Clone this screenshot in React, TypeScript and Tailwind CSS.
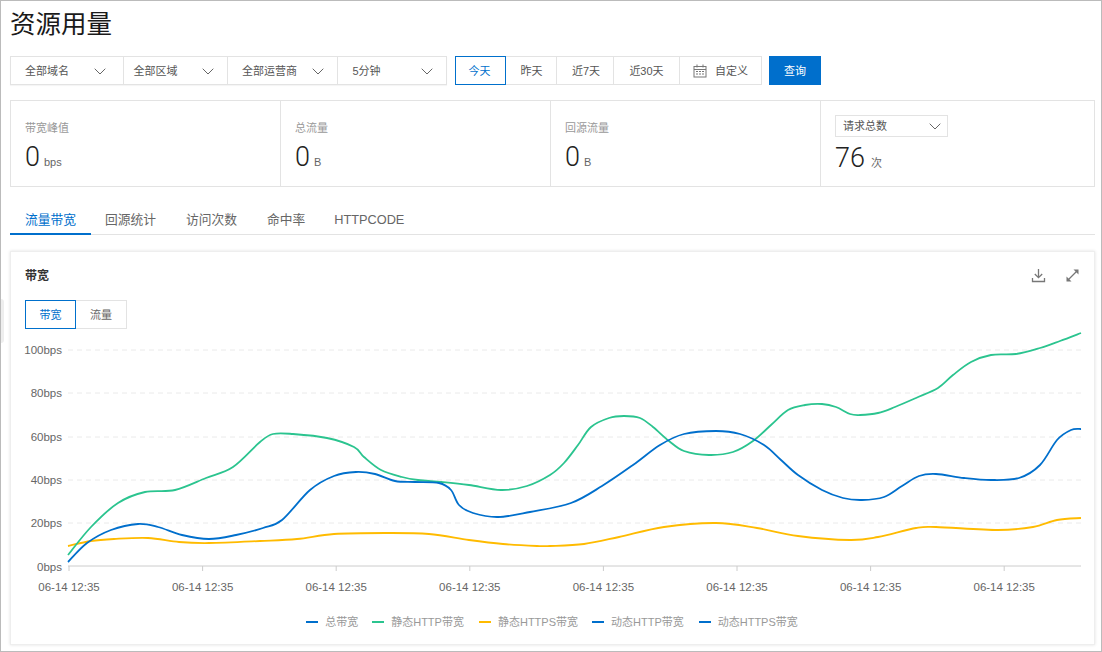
const font = { fontFamily: '"Liberation Sans", "Noto Sans CJK SC", sans-serif' };

const green = [[68,555],[91,527],[118,503],[145,492],[175,490],[206,478],[233,467],[260,442],[273,434],[293,434],[327,438],[354,447],[364,457],[381,470],[402,477],[418,480],[442,482],[469,485],[501,490],[527,486],[550,475],[564,463],[578,445],[591,427],[609,418],[624,416],[640,418],[653,427],[669,441],[684,451],[709,455],[733,452],[753,441],[771,425],[788,410],[805,405],[822,404],[836,407],[850,414],[860,415],[878,413],[895,407],[916,398],[938,388],[953,375],[971,362],[991,355],[1016,354],[1040,348],[1060,341],[1081,333]];
const blue = [[68,562],[87,543],[111,530],[138,524],[158,527],[182,535],[209,539],[236,535],[263,528],[282,520],[310,490],[334,476],[356,472],[375,474],[395,481],[415,482],[439,483],[451,490],[459,505],[473,513],[498,517],[530,512],[571,503],[602,486],[633,465],[660,445],[684,434],[716,431],[740,434],[764,445],[781,460],[798,475],[822,490],[843,498],[862,500],[884,497],[902,486],[919,476],[936,474],[964,478],[991,480],[1019,478],[1040,465],[1057,440],[1071,430],[1081,429]];
const yellow = [[68,546],[91,541],[114,539],[148,538],[179,542],[209,543],[260,541],[297,539],[334,534],[385,533],[429,534],[469,540],[503,544],[537,546],[550,546],[584,544],[619,537],[664,527],[716,523],[757,528],[798,536],[850,540],[878,537],[916,528],[936,527],[998,530],[1033,527],[1057,520],[1081,518]];

// catmull-rom through the sampled points
function smooth(pts: number[][]) {
  let d = `M${pts[0][0]} ${pts[0][1]}`;
  for (let i = 0; i < pts.length - 1; i++) {
    const p0 = pts[i - 1] || pts[i];
    const p1 = pts[i];
    const p2 = pts[i + 1];
    const p3 = pts[i + 2] || p2;
    const c1x = p1[0] + (p2[0] - p0[0]) / 6;
    const c1y = p1[1] + (p2[1] - p0[1]) / 6;
    const c2x = p2[0] - (p3[0] - p1[0]) / 6;
    const c2y = p2[1] - (p3[1] - p1[1]) / 6;
    d += ` C${c1x} ${c1y} ${c2x} ${c2y} ${p2[0]} ${p2[1]}`;
  }
  return d;
}

const gridLines = [
  { y: 350, label: '100bps' },
  { y: 393, label: '80bps' },
  { y: 437, label: '60bps' },
  { y: 480, label: '40bps' },
  { y: 523, label: '20bps' },
];
const ticks = [69, 202.6, 336.2, 469.8, 603.4, 737, 870.6, 1004.2];

const selects = [
  { label: '全部域名', box: 'w-[113px] pl-[14px] pr-[17px]' },
  { label: '全部区域', box: 'w-[105px] pl-[10px] pr-[13px]' },
  { label: '全部运营商', box: 'w-[110px] pl-[14px] pr-[13px]' },
  { label: '5分钟', box: 'w-[109px] pl-[15px] pr-[13px]' },
];

const legend = [
  { label: '总带宽', color: 'bg-[#006fcc]', ml: 'ml-0' },
  { label: '静态HTTP带宽', color: 'bg-[#2bc48f]', ml: 'ml-[14px]' },
  { label: '静态HTTPS带宽', color: 'bg-[#ffbb00]', ml: 'ml-[15px]' },
  { label: '动态HTTP带宽', color: 'bg-[#006fcc]', ml: 'ml-[14px]' },
  { label: '动态HTTPS带宽', color: 'bg-[#006fcc]', ml: 'ml-[15px]' },
];

function Chevron() {
  return (
    <svg width="12" height="7" viewBox="0 0 12 7" fill="none" stroke="#666" strokeWidth="1">
      <path d="M0.7 0.7 L6 6 L11.3 0.7" />
    </svg>
  );
}

function Stat({ label, value, unit, w }: { label: string; value: string; unit: string; w: string }) {
  return (
    <div className={`${w} h-full border-r border-[#e3e3e3] pl-[14px] pt-[20px]`}>
      <p className="text-[11px] leading-[15px] text-[#999]">{label}</p>
      <p className="mt-[4px] flex items-baseline leading-[34px]">
        <span className="text-[27px] font-light text-[#222]" style={{ fontFamily: 'Roboto, sans-serif' }}>{value}</span>
        <span className="ml-[4px] text-[11px] text-[#666]">{unit}</span>
      </p>
    </div>
  );
}

export default function App() {
  return (
    <div className="relative h-[652px] w-[1102px] overflow-hidden border border-[#bbb] bg-white px-[9px]" style={font}>
      <div className="absolute left-0 top-[298px] h-[44px] w-[3px] rounded-r-sm bg-[#eee]" />

      <h1 className="h-[55px] pt-[5px] text-[25.5px] leading-[36px] text-[#1a1a1a]">资源用量</h1>

      <div className="flex h-[29px]">
        <div className="flex h-full w-[437px] border border-[#e3e3e3] shadow-[0_1px_1px_rgba(0,0,0,0.04)]">
          {selects.map((s) => (
            <div
              key={s.label}
              className={`${s.box} flex items-center justify-between border-r border-[#e3e3e3] pt-[1px] text-[11px] text-[#555] last:border-r-0`}
            >
              <span>{s.label}</span>
              <Chevron />
            </div>
          ))}
        </div>
        <div className="ml-[8px] flex h-full w-[307px] border border-[#e3e3e3] text-[11px] text-[#555]">
          <div className="-m-px flex w-[51px] items-center justify-center border border-[#0070cc] pr-[2px] pt-[1px] text-[#0070cc]">今天</div>
          <div className="flex w-[52px] items-center justify-center border-r border-[#e3e3e3] pl-[2px] pt-[1px]">昨天</div>
          <div className="flex w-[57px] items-center justify-center border-r border-[#e3e3e3] pl-[2px] pt-[1px]">近7天</div>
          <div className="flex w-[66px] items-center justify-center border-r border-[#e3e3e3] pt-[1px]">近30天</div>
          <div className="flex flex-1 items-center justify-center gap-[8px] pt-[1px]">
            <svg width="14" height="14" viewBox="0 0 14 14" fill="none" stroke="#777" strokeWidth="1">
              <rect x="1" y="2.5" width="12" height="10.5" />
              <path d="M1 5.5 H13 M4 0.5 V3.5 M10 0.5 V3.5" />
              <path d="M3 7.5 H5 M6 7.5 H8 M9 7.5 H11 M3 10 H5 M6 10 H8 M9 10 H11" />
            </svg>
            <span>自定义</span>
          </div>
        </div>
        <button className="ml-[7px] h-full w-[52px] bg-[#006fcc] pt-[1px] text-[11px] text-white">查询</button>
      </div>

      <div className="mt-[15px] flex h-[87px] w-[1085px] border border-[#e3e3e3]">
        <Stat label="带宽峰值" value="0" unit="bps" w="w-[270px]" />
        <Stat label="总流量" value="0" unit="B" w="w-[270px]" />
        <Stat label="回源流量" value="0" unit="B" w="w-[270px]" />
        <div className="flex-1 pl-[14px] pt-[14px]">
          <div className="flex h-[22px] w-[113px] items-center justify-between border border-[#e3e3e3] pl-[7px] pr-[6px] text-[11px] text-[#555]">
            <span>请求总数</span>
            <Chevron />
          </div>
          <p className="mt-[4px] flex items-baseline leading-[34px]">
            <span className="text-[27px] font-light text-[#222]" style={{ fontFamily: 'Roboto, sans-serif' }}>76</span>
            <span className="ml-[6px] text-[11px] text-[#666]">次</span>
          </p>
        </div>
      </div>

      <div className="mt-[20px] flex h-[28px] w-[1085px] border-b border-[#e3e3e3] text-[12.75px] text-[#666]">
        <div className="h-[28px] w-[81px] border-b-2 border-[#006fcc] pt-[3px] text-center text-[#006fcc]">流量带宽</div>
        <div className="-ml-px px-[15px] pt-[3px]">回源统计</div>
        <div className="px-[15px] pt-[3px]">访问次数</div>
        <div className="px-[15px] pt-[3px]">命中率</div>
        <div className="pl-[14px] pt-[3px]">HTTPCODE</div>
      </div>

      <div className="mt-[16px] h-[394px] w-[1085px] border border-[#eee] shadow-[0_0_3px_rgba(0,0,0,0.12)]">
        <div className="flex h-[48px] items-center justify-between pb-[1px] pl-[14px] pr-[14px]">
          <span className="text-[12px] font-bold text-[#333]">带宽</span>
          <div className="flex items-center gap-[19px]">
            <svg width="15" height="15" viewBox="0 0 15 15" fill="none" stroke="#777" strokeWidth="1.3">
              <path d="M7.5 1 V9.5 M3.8 6 L7.5 9.7 L11.2 6" />
              <path d="M1.5 10 V13.5 H13.5 V10" />
            </svg>
            <svg width="15" height="15" viewBox="0 0 15 15" fill="none" stroke="#777" strokeWidth="1.2">
              <path d="M3 12 L12 3" />
              <path d="M8.5 1.5 H13.5 V6.5 L8.5 1.5 Z" fill="#777" stroke="none" />
              <path d="M1.5 8.5 V13.5 H6.5 L1.5 8.5 Z" fill="#777" stroke="none" />
            </svg>
          </div>
        </div>
        <div className="ml-[14px] flex h-[29px] w-[102px] text-[11px]">
          <div className="flex w-[51px] items-center justify-center border border-[#0070cc] pt-[1px] text-[#0070cc]">带宽</div>
          <div className="flex w-[51px] items-center justify-center border border-l-0 border-[#e3e3e3] pt-[1px] text-[#666]">流量</div>
        </div>

        <svg className="block" width="1083" height="286" viewBox="11 329 1083 286">
          {gridLines.map((g) => (
            <g key={g.y}>
              <line x1="68" x2="1081" y1={g.y} y2={g.y} stroke="#eaeaea" strokeDasharray="5 4" />
              <text x="62" y={g.y + 4} textAnchor="end" fontSize="11.5" fill="#666">{g.label}</text>
            </g>
          ))}
          <text x="62" y="571" textAnchor="end" fontSize="11.5" fill="#666">0bps</text>
          <line x1="68" x2="1081" y1="566" y2="566" stroke="#ccc" />
          {ticks.map((x) => (
            <g key={x}>
              <line x1={x} x2={x} y1="566" y2="571" stroke="#ccc" />
              <text x={x} y="591" textAnchor="middle" fontSize="11.5" fill="#666">06-14 12:35</text>
            </g>
          ))}
          <path d={smooth(yellow)} fill="none" stroke="#ffbb00" strokeWidth="1.8" />
          <path d={smooth(green)} fill="none" stroke="#2bc48f" strokeWidth="1.8" />
          <path d={smooth(blue)} fill="none" stroke="#006fcc" strokeWidth="1.8" />
        </svg>

        <div className="flex h-[14px] items-center justify-center pr-[1px] text-[11px] leading-[14px] text-[#999]">
          {legend.map((l) => (
            <div key={l.label} className={`${l.ml} flex items-center`}>
              <span className={`${l.color} h-[2px] w-[12px]`} />
              <span className="ml-[7px]">{l.label}</span>
            </div>
          ))}
        </div>
      </div>
    </div>
  );
}
